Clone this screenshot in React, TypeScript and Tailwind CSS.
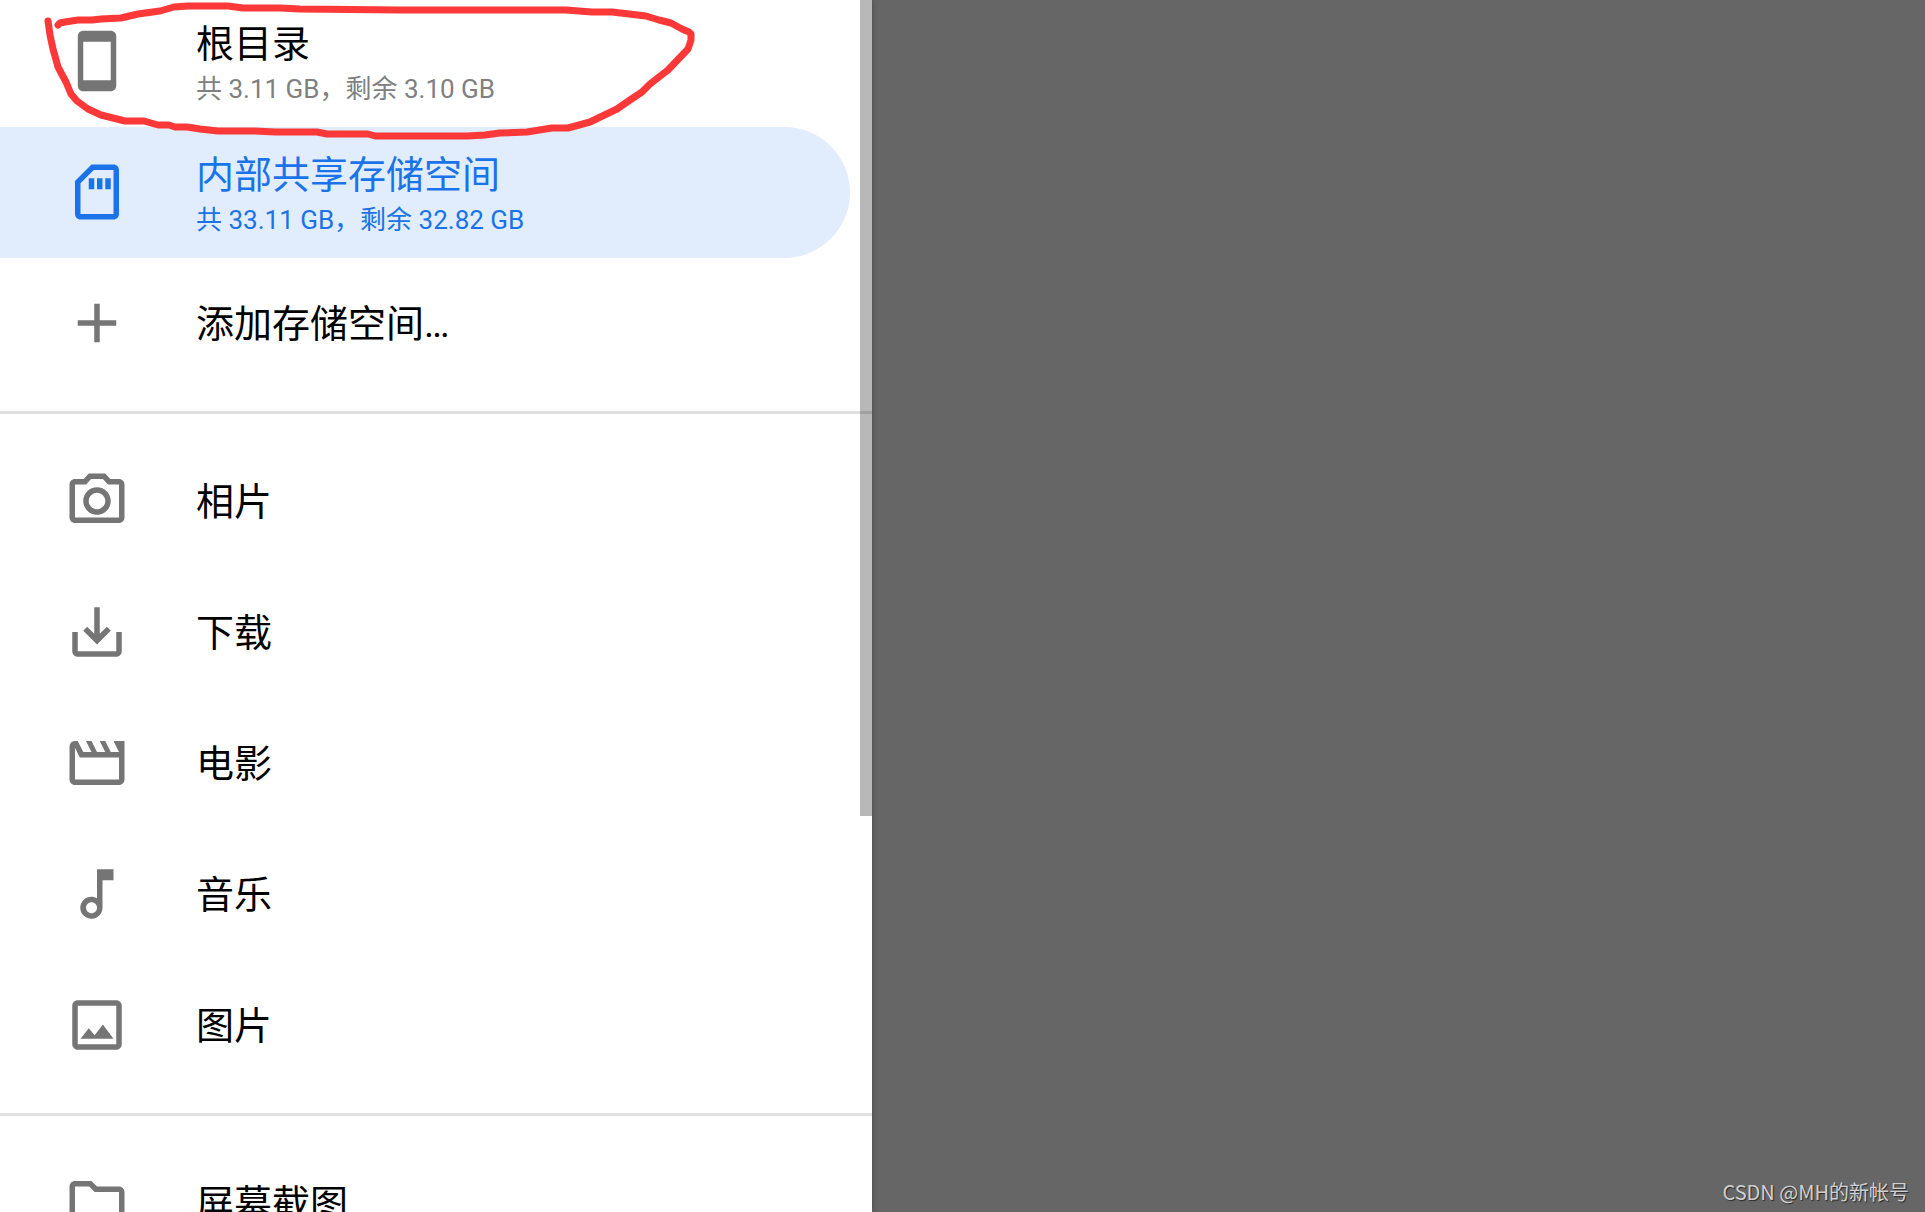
import type { IconType } from "react-icons";
import {
  MdAdd,
  MdOutlineFolder,
  MdOutlineImage,
  MdOutlineMovie,
  MdOutlineMusicNote,
  MdOutlinePhotoCamera,
  MdOutlineSdCard,
  MdSaveAlt,
  MdStayCurrentPortrait,
} from "react-icons/md";
import clsx from "clsx";

interface DrawerItemProps {
  icon: IconType;
  title: string;
  summary?: string;
  active?: boolean;
}

const storage: DrawerItemProps[] = [
  {
    icon: MdStayCurrentPortrait,
    title: "根目录",
    summary: "共 3.11 GB，剩余 3.10 GB",
  },
  {
    icon: MdOutlineSdCard,
    title: "内部共享存储空间",
    summary: "共 33.11 GB，剩余 32.82 GB",
    active: true,
  },
  { icon: MdAdd, title: "添加存储空间…" },
];

const library: DrawerItemProps[] = [
  { icon: MdOutlinePhotoCamera, title: "相片" },
  { icon: MdSaveAlt, title: "下载" },
  { icon: MdOutlineMovie, title: "电影" },
  { icon: MdOutlineMusicNote, title: "音乐" },
  { icon: MdOutlineImage, title: "图片" },
];

const folders: DrawerItemProps[] = [
  { icon: MdOutlineFolder, title: "屏幕截图" },
];

function DrawerItem({ icon: Icon, title, summary, active = false }: DrawerItemProps) {
  return (
    <li>
      <button
        type="button"
        aria-current={active ? "page" : undefined}
        className={clsx(
          "flex h-[131px] w-full items-center gap-[66px] rounded-r-full pl-16 text-left",
          active ? "bg-[#e1edfc] text-[#1a73e8]" : "text-black"
        )}
      >
        <Icon
          className={clsx("mb-0.5 size-[66px] shrink-0", !active && "text-[#757575]")}
        />
        <span className={clsx("flex flex-col", summary && "pt-2")}>
          <span className="text-[38px] leading-[46px]">{title}</span>
          {summary && (
            <span
              className={clsx(
                "text-[26px] leading-[44px]",
                !active && "text-[#808080]"
              )}
            >
              {summary}
            </span>
          )}
        </span>
      </button>
    </li>
  );
}

function DrawerGroup({ items }: { items: DrawerItemProps[] }) {
  return (
    <ul className="pr-[22px]">
      {items.map((item) => (
        <DrawerItem key={item.title} {...item} />
      ))}
    </ul>
  );
}

function Divider() {
  return <hr className="my-[22px] border-t-[3px] border-[#e0e0e0]" />;
}

// freehand marker loop around the first row
function MarkerLoop() {
  return (
    <svg
      className="pointer-events-none absolute left-0 top-0"
      width="720"
      height="150"
      viewBox="0 0 720 150"
      fill="none"
      stroke="#fc3838"
      strokeWidth="7"
      strokeLinecap="round"
      strokeLinejoin="round"
      aria-hidden="true"
    >
      <path d="M48 21L50 35L53 49L58 67L66 82L71 94L77 101L88 109L101 115L125 121H144L158 125H169L175 127H187L200 129L218 131H255L275 132H317L327 134H368L375 136H467L485 135L500 133L527 132L552 128H568L590 122L617 109L630 100L642 92L650 84L668 70L688 49L691 40V34L689 32L682 29L671 23L659 20L646 16L612 12H592L566 10H400L300 9L280 8H243L228 6H188L174 7L160 11L138 14L121 18L101 19L92 20H78L65 22L60 23L58 25" />
    </svg>
  );
}

export default function App() {
  return (
    <div className="relative flex h-screen overflow-hidden bg-[#666666] font-['Roboto','Noto_Sans_CJK_SC',sans-serif]">
      <nav className="relative h-full w-[45.3%] overflow-hidden bg-white shadow-[0_0_6px_rgba(0,0,0,0.3)]">
        <div className="-mt-1">
          <DrawerGroup items={storage} />
          <Divider />
          <DrawerGroup items={library} />
          <Divider />
          <DrawerGroup items={folders} />
        </div>
        {/* scroll thumb */}
        <div className="absolute right-0 top-0 h-[816px] w-3 bg-black/28" />
        <MarkerLoop />
      </nav>
      <p className="absolute bottom-1 right-4 font-['Noto_Sans_CJK_SC',sans-serif] text-[20px] leading-8 text-[#d0d0d0] [text-shadow:1px_1px_1px_rgba(0,0,0,0.6)]">
        CSDN @MH的新帐号
      </p>
    </div>
  );
}
